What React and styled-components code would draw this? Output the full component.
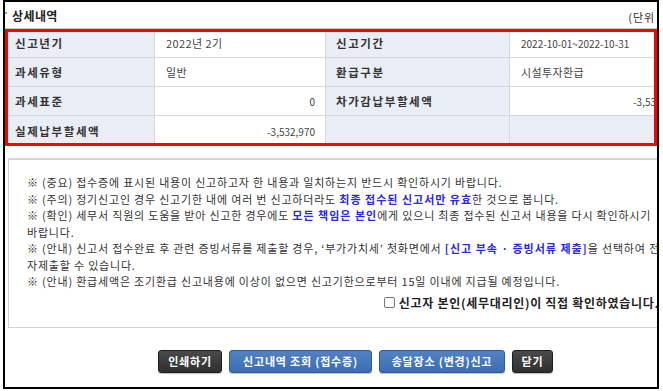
import React from "react";
import styled, { createGlobalStyle } from "styled-components";

const Global = createGlobalStyle`
  html, body { margin: 0; padding: 0; background: #fff; }
  body { font-family: "Noto Sans CJK KR", "Noto Sans", sans-serif; color: #333; }
`;

const Frame = styled.div`
  box-sizing: border-box;
  margin-left: 3px;
  width: 656px;
  height: 389px;
  border: 2px solid #000;
  overflow: hidden;
  background: #fff;
`;

const Header = styled.div`
  width: 701px;
  height: 26px;
  border-bottom: 1px solid #c9c9c9;
  display: flex;
  align-items: center;
  justify-content: space-between;
`;

const Title = styled.div`
  position: relative;
  padding-left: 7px;
  font-size: 12px;
  font-weight: 700;
  color: #222;
  letter-spacing: 0.4px;
  &::before {
    content: "";
    position: absolute;
    left: 0;
    top: 50%;
    width: 2px;
    height: 2px;
    margin-top: -3px;
    background: #999;
  }
`;

const Unit = styled.div`
  font-size: 11px;
  color: #333;
  letter-spacing: 1px;
  padding-right: 24px;
  margin-top: 4px;
`;

const RedBox = styled.div`
  position: relative;
  overflow: hidden;
  &::after {
    content: "";
    position: absolute;
    inset: 0;
    border: 3px solid #ff0000;
    pointer-events: none;
  }
`;

const Table = styled.div`
  display: grid;
  width: 687px;
  grid-template-columns: 150px 171px 184px 182px;
  grid-template-rows: 29px 29px 29px 30px;
`;

const Cell = styled.div`
  box-sizing: border-box;
  display: flex;
  align-items: center;
  justify-content: ${(p) => (p.$num ? "flex-end" : "flex-start")};
  padding: ${(p) => (p.$num ? "0 10px 0 0" : p.$label ? "0 0 0 10px" : "0 0 0 11px")};
  background: ${(p) => (p.$label ? "#e9edf5" : "#fff")};
  border-right: 1px solid #d4dae4;
  border-bottom: ${(p) => (p.$last ? "none" : "1px solid #d4dae4")};
  font-size: ${(p) => (p.$label ? "11.5px" : p.$digits ? "10px" : "11px")};
  font-weight: ${(p) => (p.$label ? 700 : 400)};
  letter-spacing: ${(p) => (p.$label ? "1.6px" : p.$digits ? "0" : "0.4px")};
  color: ${(p) => (p.$label ? "#333" : "#444")};
  white-space: pre;
`;

const Notes = styled.div`
  box-sizing: border-box;
  width: 698px;
  margin: 12px 0 0 3px;
  border: 1px solid #d2d2d2;
  border-top: 2px solid #d6d6d6;
  padding: 14px 0 16px 18px;
`;

const NoteLine = styled.div`
  font-size: 11px;
  line-height: 16.5px;
  letter-spacing: 0.8px;
  color: #333;
  white-space: nowrap;
`;

const Em = styled.b`
  color: #2a2adf;
  font-weight: 700;
  letter-spacing: 1px;
`;

const ConfirmRow = styled.label`
  display: flex;
  justify-content: flex-end;
  align-items: center;
  gap: 4px;
  margin-top: 5px;
  padding-right: 46px;
  height: 16px;
`;

const Check = styled.span`
  box-sizing: border-box;
  width: 11px;
  height: 11px;
  border: 1px solid #767676;
  border-radius: 2px;
  background: #fff;
`;

const ConfirmText = styled.span`
  font-size: 12px;
  font-weight: 700;
  color: #222;
  letter-spacing: 0.7px;
  white-space: nowrap;
`;

const Buttons = styled.div`
  width: 701px;
  display: flex;
  justify-content: center;
  gap: 7px;
  margin-top: 22px;
`;

const Button = styled.button`
  box-sizing: border-box;
  height: 23px;
  width: ${(p) => p.$w}px;
  padding: 0;
  border-radius: 3px;
  border: 1px solid ${(p) => (p.$blue ? "#2e5c98" : "#1f1f1f")};
  background: ${(p) =>
    p.$blue
      ? "linear-gradient(#5082c4, #3d6db0)"
      : "linear-gradient(#4a4a4a, #2f2f2f)"};
  color: #fff;
  font-family: "Noto Sans CJK KR", sans-serif;
  font-size: 11px;
  font-weight: 700;
  letter-spacing: 0.8px;
  white-space: nowrap;
  box-shadow: 0 1px 1px rgba(0, 0, 0, 0.25);
`;

const rows = [
  [
    { t: "신고년기", label: true },
    { t: "2022년 2기" },
    { t: "신고기간", label: true },
    { t: "2022-10-01~2022-10-31", digits: true },
  ],
  [
    { t: "과세유형", label: true },
    { t: "일반" },
    { t: "환급구분", label: true },
    { t: "시설투자환급" },
  ],
  [
    { t: "과세표준", label: true },
    { t: "0", num: true, digits: true },
    { t: "차가감납부할세액", label: true },
    { t: "-3,532,970", num: true, digits: true },
  ],
  [
    { t: "실제납부할세액", label: true },
    { t: "-3,532,970", num: true, digits: true },
    { t: "", label: true },
    { t: "", label: true },
  ],
];

export default function App() {
  return (
    <>
      <Global />
      <Frame>
        <Header>
          <Title>상세내역</Title>
          <Unit>(단위 : 원)</Unit>
        </Header>
        <RedBox>
          <Table>
            {rows.map((r, i) =>
              r.map((c, j) => (
                <Cell
                  key={`${i}-${j}`}
                  $label={c.label}
                  $num={c.num}
                  $digits={c.digits}
                  $last={i === rows.length - 1}
                >
                  {c.t}
                </Cell>
              ))
            )}
          </Table>
        </RedBox>
        <Notes>
          <NoteLine>※ (중요) 접수증에 표시된 내용이 신고하고자 한 내용과 일치하는지 반드시 확인하시기 바랍니다.</NoteLine>
          <NoteLine>
            ※ (주의) 정기신고인 경우 신고기한 내에 여러 번 신고하더라도 <Em>최종 접수된 신고서만 유효</Em>한 것으로 봅니다.
          </NoteLine>
          <NoteLine>
            ※ (확인) 세무서 직원의 도움을 받아 신고한 경우에도 <Em>모든 책임은 본인</Em>에게 있으니 최종 접수된 신고서 내용을 다시 확인하시기
          </NoteLine>
          <NoteLine>바랍니다.</NoteLine>
          <NoteLine>
            ※ (안내) 신고서 접수완료 후 관련 증빙서류를 제출할 경우, ‘부가가치세’ 첫화면에서 <Em>[신고 부속 · 증빙서류 제출]</Em>을 선택하여 전
          </NoteLine>
          <NoteLine>자제출할 수 있습니다.</NoteLine>
          <NoteLine>※ (안내) 환급세액은 조기환급 신고내용에 이상이 없으면 신고기한으로부터 15일 이내에 지급될 예정입니다.</NoteLine>
          <ConfirmRow>
            <Check />
            <ConfirmText>신고자 본인(세무대리인)이 직접 확인하였습니다.</ConfirmText>
          </ConfirmRow>
        </Notes>
        <Buttons>
          <Button $w={64}>인쇄하기</Button>
          <Button $blue $w={143}>신고내역 조회 (접수증)</Button>
          <Button $blue $w={126}>송달장소 (변경)신고</Button>
          <Button $w={41}>닫기</Button>
        </Buttons>
      </Frame>
    </>
  );
}
